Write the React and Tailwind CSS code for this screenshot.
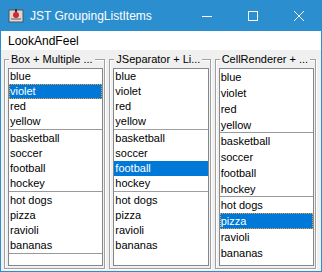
import React from 'react';

const GROUPS = [
  ['blue', 'violet', 'red', 'yellow'],
  ['basketball', 'soccer', 'football', 'hockey'],
  ['hot dogs', 'pizza', 'ravioli', 'bananas'],
];

const Row = ({ label, selected, focused, tall, divider }) => (
  <div
    className={[
      'box-border pl-px whitespace-nowrap',
      tall ? 'h-[16px] leading-[16px]' : 'h-[15px] leading-[15px]',
      selected ? 'bg-[#0078d7] text-white' : 'text-black',
      focused ? 'outline-1 outline-dotted -outline-offset-1 outline-[#f0a23c]' : '',
      divider ? 'border-b border-[#9a9a9a]' : '',
    ].join(' ')}
  >
    {label}
  </div>
);

const Panel = ({ title, children }) => (
  <fieldset className="flex-1 min-w-0 border border-[#a0a0a0] shadow-[inset_1px_1px_0_#ffffff,1px_1px_0_#ffffff] pl-[3px] pr-[1px] pt-[2px] pb-[2px] flex flex-col">
    <legend className="ml-[1px] px-[2px] h-[14px] leading-[14px] text-[11px] text-black whitespace-nowrap bg-[#f0f0f0]">
      {title}
    </legend>
    <div className="flex-1 border border-[#828790] bg-white overflow-hidden">{children}</div>
  </fieldset>
);

const App = () => {
  return (
    <div
      className="w-[322px] h-[272px] bg-[#2b8fcf] flex flex-col overflow-hidden"
      style={{ fontFamily: '"Liberation Sans", Arial, sans-serif' }}
    >
      <div className="h-[31px] flex items-center text-white shrink-0">
        <svg width="16" height="16" viewBox="0 0 16 16" className="ml-[8px]">
          <rect x="1" y="2" width="14" height="12" fill="#d8d8d8" stroke="#555" />
          <rect x="3" y="10" width="10" height="2" fill="#9a9a9a" />
          <circle cx="8" cy="7" r="3" fill="#e0202a" />
          <rect x="7" y="1" width="2" height="3" fill="#333" />
        </svg>
        <span className="ml-[6px] text-[12px] leading-none">JST GroupingListItems</span>
        <div className="ml-auto flex items-center h-full">
          <div className="w-[46px] h-full flex items-center justify-center">
            <svg width="10" height="10" viewBox="0 0 10 10">
              <line x1="0" y1="5.5" x2="10" y2="5.5" stroke="#fff" strokeWidth="1" />
            </svg>
          </div>
          <div className="w-[46px] h-full flex items-center justify-center">
            <svg width="10" height="10" viewBox="0 0 10 10">
              <rect x="0.5" y="0.5" width="9" height="9" fill="none" stroke="#fff" strokeWidth="1" />
            </svg>
          </div>
          <div className="w-[46px] h-full flex items-center justify-center">
            <svg width="10" height="10" viewBox="0 0 10 10">
              <path d="M0 0 L10 10 M10 0 L0 10" stroke="#fff" strokeWidth="1" />
            </svg>
          </div>
        </div>
      </div>

      <div className="flex-1 mx-px mb-px bg-[#f0f0f0] flex flex-col min-h-0">
        <div className="h-[19px] bg-white flex items-center pl-[7px] text-[12px] text-black shrink-0">
          LookAndFeel
        </div>
        <div className="flex-1 flex gap-[4px] pl-[3px] pr-[5px] pt-[2px] pb-[2px] min-h-0">
          <Panel title="Box + Multiple ...">
            <div className="text-[11px]">
              {GROUPS.map((g, gi) => (
                <div key={gi} className="border-b border-[#9a9a9a] mb-px">
                  {g.map((item) => (
                    <Row key={item} label={item} selected={item === 'violet'} focused={item === 'violet'} />
                  ))}
                </div>
              ))}
            </div>
          </Panel>
          <Panel title="JSeparator + Li...">
            <div className="text-[11px]">
              {GROUPS.map((g, gi) => (
                <div key={gi}>
                  {gi > 0 && <div className="h-[2px] border-t border-[#a0a0a0] bg-white" />}
                  {g.map((item) => (
                    <Row key={item} label={item} selected={item === 'football'} />
                  ))}
                </div>
              ))}
            </div>
          </Panel>
          <Panel title="CellRenderer + ...">
            <div className="text-[11px]">
              {GROUPS.map((g, gi) =>
                g.map((item, ii) => (
                  <Row
                    key={item}
                    label={item}
                    tall
                    selected={item === 'pizza'}
                    focused={item === 'pizza'}
                    divider={ii === 3 && gi < 2}
                  />
                ))
              )}
            </div>
          </Panel>
        </div>
      </div>
    </div>
  );
};

export default App;
